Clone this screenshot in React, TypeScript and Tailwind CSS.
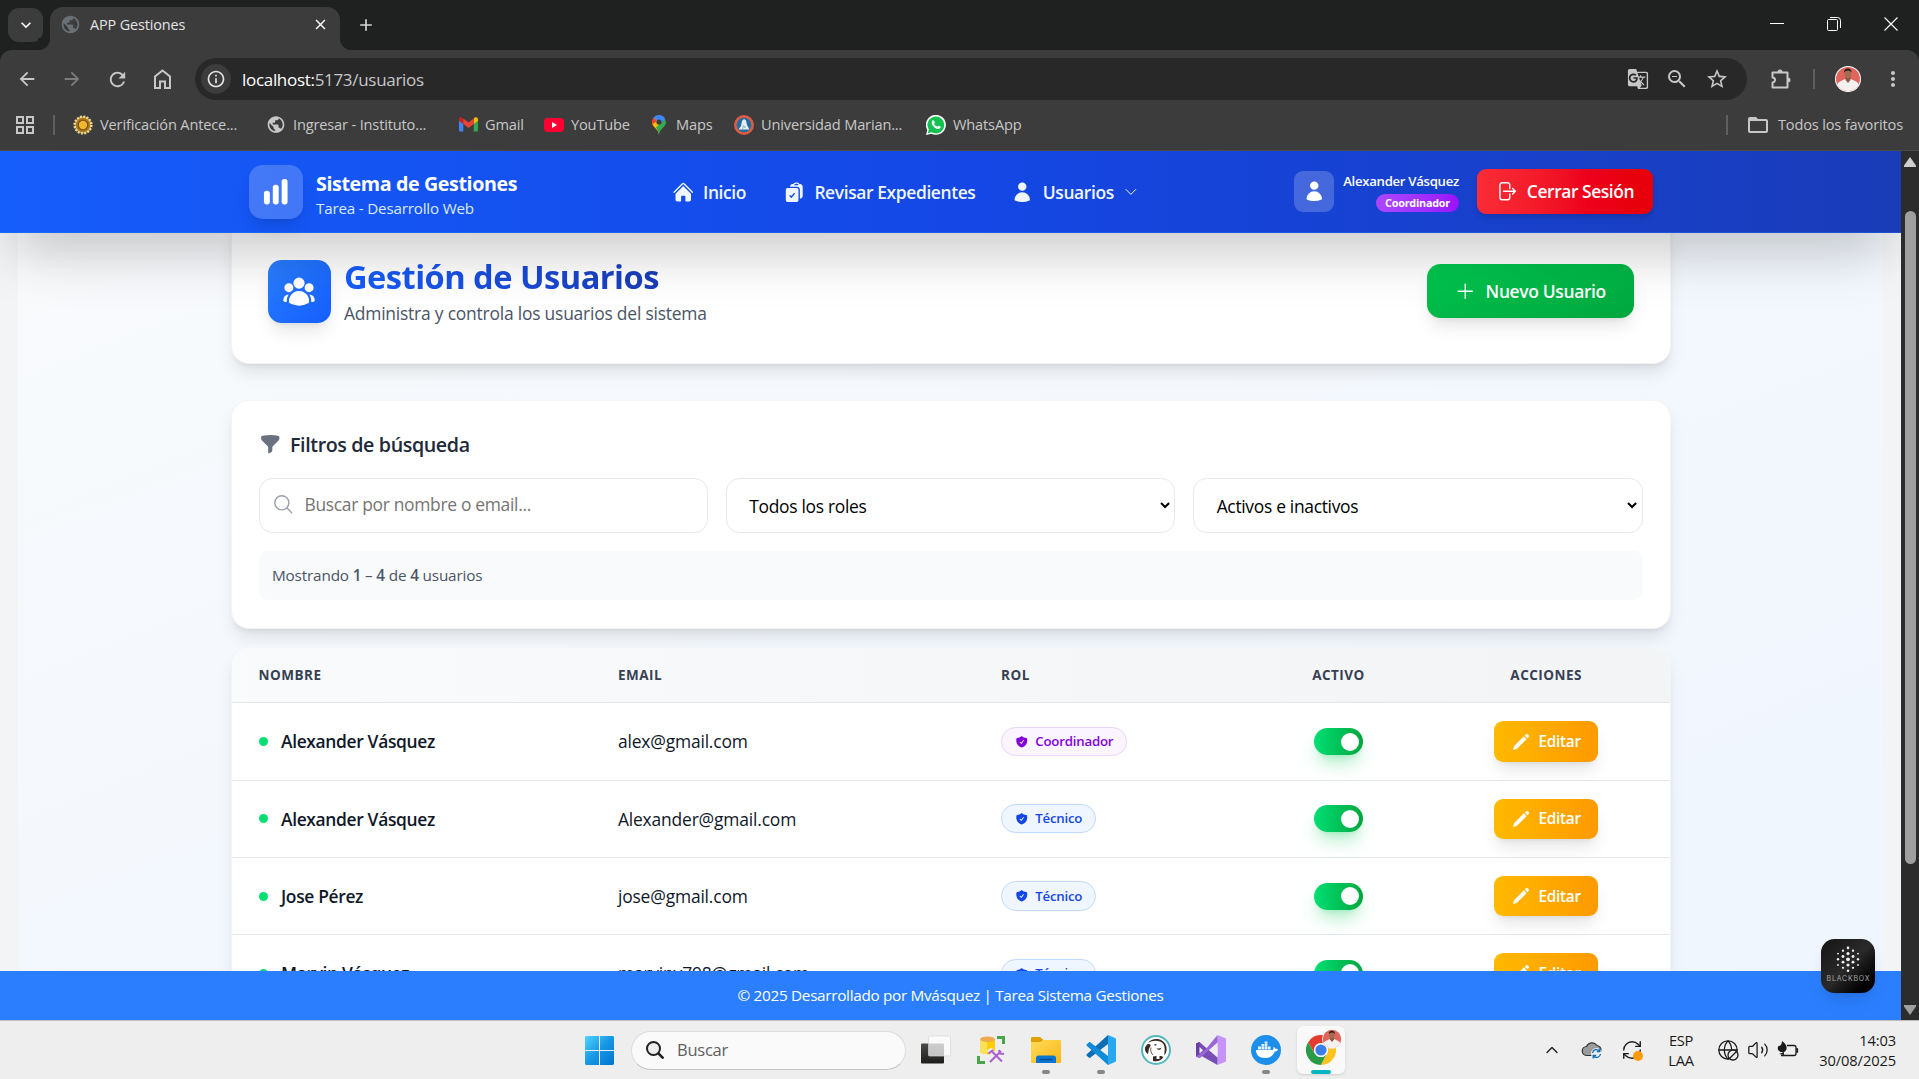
import type { ReactNode } from "react";
import {
  HiChartBar, HiHome, HiClipboardDocumentCheck, HiUser, HiUserGroup, HiFunnel, HiPencil, HiShieldCheck,
  HiOutlineChevronDown, HiOutlineArrowRightOnRectangle, HiOutlinePlus, HiOutlineMagnifyingGlass,
} from "react-icons/hi2";
import {
  MdArrowBack, MdArrowForward, MdRefresh, MdInfoOutline, MdGTranslate, MdOutlineZoomOut,
  MdStarOutline, MdMoreVert, MdFolderOpen, MdPublic, MdClose, MdAdd, MdKeyboardArrowDown,
} from "react-icons/md";
import { Globe, Volume2, RefreshCw, ChevronUp } from "lucide-react";

/* ---------- Browser chrome ---------- */

function Avatar({ className = "" }: { className?: string }) {
  return (
    <svg viewBox="0 0 26 26" className={className}>
      <defs>
        <clipPath id="av"><circle cx="13" cy="13" r="12" /></clipPath>
      </defs>
      <circle cx="13" cy="13" r="13" fill="#fff" />
      <g clipPath="url(#av)">
        <rect width="26" height="26" fill="#e0655c" />
        <path d="M1 26c0-6 1-10 6-11.500l3-1.500h6l3 1.500c5 1.500 6 5.500 6 11.500z" fill="#f5f1ef" />
        <path d="M10.500 10h5v4l-2.500 3-2.500-3z" fill="#8a5a45" />
        <ellipse cx="12.800" cy="7.500" rx="3.400" ry="4.800" fill="#a26d54" />
        <path d="M9 6.500C8.600 1 17 1 16.600 6.500 15 3.800 11 3.800 9 6.500z" fill="#241a18" />
      </g>
    </svg>
  );
}

function HomeIcon() {
  return (
    <svg viewBox="0 0 24 24" className="ml-[21px] size-6" fill="none" stroke="currentColor" strokeWidth="2">
      <path d="M5 21V9.500L12.500 3.500 20 9.500V21h-5v-6.500h-5V21z" />
    </svg>
  );
}

function PuzzleIcon() {
  return (
    <svg viewBox="0 0 24 24" className="ml-[22px] size-6" fill="none" stroke="currentColor" strokeWidth="2">
      <path d="M3.500 5.500h15v15h-15v-5a2.500 2.500 0 0 0 0-5z" strokeLinejoin="round" />
      <path d="M8.500 5a2.500 2.500 0 0 1 5 0zM19 10.500a2.500 2.500 0 0 1 0 5z" fill="currentColor" stroke="none" />
    </svg>
  );
}

function Seal() {
  return (
    <svg viewBox="0 0 20 20" className="size-5">
      <circle cx="10" cy="10" r="8.400" fill="#c99a2c" stroke="#e8d9a0" strokeWidth="2.400" strokeDasharray="2 1.300" />
      <circle cx="10" cy="10" r="7" fill="#a87420" />
      <circle cx="10" cy="10" r="5.300" fill="#7a4b13" />
      <circle cx="10" cy="10" r="4.200" fill="#edb730" />
    </svg>
  );
}

function Gmail() {
  return (
    <svg viewBox="0 0 20 16" className="w-[19px]">
      <path d="M0 3v11c0 .8.600 1.300 1.300 1.300h3.200V7z" fill="#4285f4" />
      <path d="M20 3v11c0 .8-.6 1.300-1.300 1.300h-3.200V7z" fill="#34a853" />
      <path d="M15.500 2v5.500L20 4V2.500C20 .5 17.800-.500 16.200.7z" fill="#fbbc04" />
      <path d="M0 2.500V4l4.500 3.500V2l-.7-.7C2.200-.5 0 .5 0 2.500z" fill="#c5221f" />
      <path d="M4.500 7.500V1.500L10 5.700l5.500-4.200v6L10 11.700z" fill="#ea4335" />
    </svg>
  );
}

function YouTube() {
  return (
    <svg viewBox="0 0 20 14" className="w-5">
      <rect width="20" height="14" rx="3.500" fill="#ff0033" />
      <path d="M8 4l5 3-5 3z" fill="#fff" />
    </svg>
  );
}

function Maps() {
  return (
    <svg viewBox="0 0 14 20" className="h-5">
      <path d="M7 20C7 14 0 12.500 0 7l2-4.600L7 7z" fill="#fbbc04" />
      <path d="M7 20c0-6 7-7.500 7-13l-1-3L4 12.500C5.600 15 6.500 17 7 20z" fill="#34a853" />
      <path d="M1.600 2.600A7 7 0 0 0 .4 9.200L5 6z" fill="#ea4335" />
      <path d="M1.600 2.600A7 7 0 0 1 13.300 4L8 9z" fill="#4285f4" />
      <circle cx="7" cy="7" r="2.600" fill="#3c3c3c" />
    </svg>
  );
}

function University() {
  return (
    <svg viewBox="0 0 20 20" className="size-5">
      <circle cx="10" cy="10" r="10" fill="#dd5a45" />
      <circle cx="10" cy="10" r="7.300" fill="#1f6f9e" />
      <path d="M4.500 14.500L7 11l1-5 2-2 2 1.500 1 4.500 2.500 4.500z" fill="#e8eef2" />
      <path d="M8.500 14l1-4 1 3 1-2" stroke="#9bb8c9" fill="none" />
    </svg>
  );
}

function WhatsApp() {
  return (
    <svg viewBox="0 0 20 20" className="size-5">
      <path d="M0 20l1.300-5A10 10 0 1 1 5.200 18.700z" fill="#fff" />
      <path d="M1.800 18.200l1-3.600a8.400 8.400 0 1 1 2.900 2.700z" fill="#12c151" />
      <path d="M6.500 5.500c.8-.7 1.500-.2 1.700.5l.6 1.400c0 .6-.8 1-.6 1.500.7 1.300 1.700 2.200 3 2.700.5.100 1-1.100 1.500-.9l1.800.9c.6.500 0 2.200-1.800 2.500-3.300.2-7.200-3.700-7-6.600 0-.8.300-1.500.8-2z" fill="#fff" />
    </svg>
  );
}

function Bookmark({ icon, label, className }: { icon: ReactNode; label: string; className: string }) {
  return (
    <div className={`flex h-full shrink-0 items-center whitespace-nowrap ${className}`}>
      <span className="mr-[7px] flex w-5 shrink-0 items-center justify-center">{icon}</span>
      {label}
    </div>
  );
}

function BrowserChrome() {
  return (
    <div className="flex h-[151px] shrink-0 flex-col bg-[#1f2120] text-[#c7c7c7]">
      <div className="flex h-[50px] items-end">
        <div className="mb-2 ml-2 flex h-[34px] w-[35px] items-center justify-center rounded-[11px] bg-[#3c3c3c]">
          <MdKeyboardArrowDown className="size-5 text-white" />
        </div>
        <div className="relative ml-[7px] flex h-[43px] w-[290px] items-center rounded-t-[13px] bg-[#3c3c3c] pb-2 pl-2.5">
          <span className="absolute bottom-0 -left-3 size-3 bg-[radial-gradient(circle_at_0_0,#1f2120_12px,#3c3c3c_12.5px)]" />
          <span className="absolute -right-3 bottom-0 size-3 bg-[radial-gradient(circle_at_100%_0,#1f2120_12px,#3c3c3c_12.5px)]" />
          <MdPublic className="size-[21px] text-[#6b7075]" />
          <span className="mt-px ml-[9px] text-[14.400px] tracking-[-0.008em] text-[#e3e3e3]">APP Gestiones</span>
          <MdClose className="mr-[11px] ml-auto size-[17px] text-white" />
        </div>
        <MdAdd className="mb-[15px] ml-4 size-5 text-[#d5d5d5]" />
        <div className="mb-[19px] ml-auto flex items-center gap-[43px] pr-[21px] text-white">
          <svg viewBox="0 0 14 14" className="size-3.5"><path d="M0 6.500h14" stroke="currentColor" /></svg>
          <svg viewBox="0 0 14 14" className="size-3.5" fill="none" stroke="currentColor">
            <rect x=".5" y="2.500" width="10" height="11" rx="1" />
            <path d="M3 .5h7.500a3 3 0 0 1 3 3V11" />
          </svg>
          <svg viewBox="0 0 14 14" className="size-3.5"><path d="M.5.5l13 13M13.500.5l-13 13" stroke="currentColor" strokeWidth="1.100" /></svg>
        </div>
      </div>

      <div className="flex h-[101px] flex-col rounded-t-[12px] border-b border-[#4b4b4b] bg-[#3c3c3c]">
        <div className="mt-2 flex h-[42px] items-center">
          <MdArrowBack className="ml-4 size-[22px]" />
          <MdArrowForward className="ml-[23px] size-[22px] text-[#7c7c7c]" />
          <MdRefresh className="ml-[23px] size-[23px]" />
          <HomeIcon />
          <div className="ml-[21px] flex h-full w-[1552px] items-center rounded-full bg-[#282828]">
            <span className="ml-1.5 flex size-[30px] items-center justify-center rounded-full bg-[#3c3c3c]">
              <MdInfoOutline className="size-5 text-[#e3e3e3]" />
            </span>
            <span className="mt-px ml-[11px] text-[17px] tracking-[-0.018em] text-[#c7c7c7]">
              <span className="text-white">localhost:</span>5173/usuarios
            </span>
            <MdGTranslate className="ml-auto size-[22px]" />
            <MdOutlineZoomOut className="ml-4 size-6" />
            <MdStarOutline className="mr-[18px] ml-4 size-6" />
          </div>
          <PuzzleIcon />
          <span className="ml-5 h-5 w-0.5 bg-[#5f5f5f]" />
          <Avatar className="ml-5 size-[26px]" />
          <MdMoreVert className="ml-5 size-6" />
        </div>
        <div className="flex h-[49px] items-center text-[14.600px] tracking-[-0.011em]">
          <svg viewBox="0 0 20 20" className="ml-[15px] size-5" fill="none" stroke="currentColor" strokeWidth="2">
            <path d="M2 2h6v6H2zM12 2h6v6h-6zM2 12h6v6H2zM12 12h6v6h-6z" />
          </svg>
          <span className="ml-[18px] h-5 w-0.5 bg-[#5f5f5f]" />
          <Bookmark className="ml-[18px] w-[193px]" icon={<Seal />} label="Verificación Antece..." />
          <Bookmark className="w-[192px]" icon={<MdPublic className="size-[21px]" />} label="Ingresar - Instituto..." />
          <Bookmark className="w-[86px]" icon={<Gmail />} label="Gmail" />
          <Bookmark className="w-[105px]" icon={<YouTube />} label="YouTube" />
          <Bookmark className="w-[85px]" icon={<Maps />} label="Maps" />
          <Bookmark className="w-[192px]" icon={<University />} label="Universidad Marian..." />
          <Bookmark className="w-[100px]" icon={<WhatsApp />} label="WhatsApp" />
          <span className="ml-auto h-5 w-0.5 bg-[#5f5f5f]" />
          <MdFolderOpen className="mr-2 ml-[18px] size-6" />
          <span className="mr-4">Todos los favoritos</span>
        </div>
      </div>
    </div>
  );
}

/* ---------- Application ---------- */

function Header() {
  return (
    <header className="relative z-10 h-[73px] shrink-0 border-b border-blue-500/30 bg-gradient-to-r from-blue-600 via-blue-700 to-blue-800 shadow-2xl">
      <div className="mx-auto flex h-full w-[1280px] items-center px-4">
        <div className="flex size-12 items-center justify-center rounded-xl bg-white/20 text-white shadow-lg">
          <HiChartBar className="size-7" />
        </div>
        <div className="ml-3 w-[316px] pt-[3px]">
          <div className="text-[17.500px] leading-[26px] font-bold tracking-[-0.02em] text-white">Sistema de Gestiones</div>
          <div className="text-[13.500px] leading-[18px] tracking-[-0.012em] text-blue-100">Tarea - Desarrollo Web</div>
        </div>
        <nav className="flex items-center pt-px text-[15.500px] font-semibold tracking-[-0.022em] text-blue-50">
          <a className="flex w-[99px] items-center gap-2"><HiHome className="size-5" />Inicio</a>
          <a className="flex w-[203px] items-center gap-2"><HiClipboardDocumentCheck className="size-5" />Revisar Expedientes</a>
          <a className="flex items-center gap-2"><HiUser className="size-5" />Usuarios<HiOutlineChevronDown className="size-3.5" /></a>
        </nav>
        <div className="ml-auto flex items-center">
          <div className="flex size-9 items-center justify-center rounded-lg bg-white/20 text-white">
            <HiUser className="size-5" />
          </div>
          <div className="mr-4 ml-2 flex flex-col items-end">
            <span className="text-[11.700px] leading-[18px] font-semibold tracking-[-0.022em] text-white">Alexander Vásquez</span>
            <span className="mt-0.5 flex h-4 items-center rounded-full bg-gradient-to-r from-purple-500 to-purple-600 px-2 text-[9.600px] font-bold tracking-[-0.02em] text-white">Coordinador</span>
          </div>
          <button className="flex h-10 w-[156px] items-center justify-center gap-2 rounded-lg bg-gradient-to-r from-red-500 to-red-600 to-90% text-[15.500px] font-semibold tracking-[-0.025em] text-white shadow-md">
            <HiOutlineArrowRightOnRectangle className="size-5" />Cerrar Sesión
          </button>
        </div>
      </div>
    </header>
  );
}

type User = { name: string; email: string; role: "Coordinador" | "Técnico" };

const users: User[] = [
  { name: "Alexander Vásquez", email: "alex@gmail.com", role: "Coordinador" },
  { name: "Alexander Vásquez", email: "Alexander@gmail.com", role: "Técnico" },
  { name: "Jose Pérez", email: "jose@gmail.com", role: "Técnico" },
  { name: "Marvin Vásquez", email: "marvinv798@gmail.com", role: "Técnico" },
];

function RoleBadge({ role }: { role: User["role"] }) {
  const tone = role === "Coordinador"
    ? "border-purple-200 bg-purple-50 text-purple-700"
    : "border-blue-200 bg-blue-50 text-blue-700";
  return (
    <span className={`inline-flex h-[26px] items-center gap-1.5 rounded-full border px-[11.500px] text-[11.800px] font-semibold tracking-[-0.016em] ${tone}`}>
      <HiShieldCheck className="size-3" /><span className="pt-px">{role}</span>
    </span>
  );
}

function UserRow({ user }: { user: User }) {
  return (
    <div className="grid h-[68.700px] shrink-0 grid-cols-[320px_340px_252px_144px_1fr] items-center border-b border-gray-200 text-[15.500px] tracking-[-0.010em] text-gray-900">
      <div className="flex items-center gap-3 pl-6 font-semibold tracking-[-0.02em]">
        <span className="size-2 rounded-full bg-green-400" />{user.name}
      </div>
      <div className="pl-[23.500px]">{user.email}</div>
      <div className="flex pl-6"><RoleBadge role={user.role} /></div>
      <div className="flex justify-center">
        <span className="flex h-6 w-11 items-center justify-end rounded-full bg-gradient-to-r from-green-400 to-green-600 pr-1 shadow-lg shadow-green-500/30">
          <span className="size-4 rounded-full bg-white" />
        </span>
      </div>
      <div className="flex justify-center pl-[3px]">
        <button className="flex h-9 w-[92.500px] items-center justify-center gap-2 rounded-lg bg-gradient-to-r from-amber-400 to-amber-500 text-[13.600px] font-semibold tracking-[-0.018em] text-white shadow-lg">
          <HiPencil className="size-4" />Editar
        </button>
      </div>
    </div>
  );
}

function Select({ label }: { label: string }) {
  return (
    <div className="flex h-[49.500px] items-center justify-between rounded-xl border border-gray-200 bg-white pr-1 pl-5 text-[15.500px] tracking-[-0.018em] text-black">
      {label}
      <svg viewBox="0 0 10 7" className="w-[9px]" fill="none" stroke="currentColor" strokeWidth="2"><path d="M1 1l4 4 4-4" /></svg>
    </div>
  );
}

function UsersPage() {
  return (
    <main className="min-h-0 flex-1 overflow-hidden bg-gray-100 px-4">
      <div className="flex h-full flex-col items-center bg-gradient-to-br from-slate-50 to-blue-50">
        <section className="-mt-5 flex h-[136px] w-[1280px] shrink-0 items-center rounded-2xl border border-gray-100 bg-white px-8 pt-[7px] shadow-lg">
          <div className="flex size-14 items-center justify-center rounded-xl bg-gradient-to-br from-blue-500 to-blue-600 text-white shadow-lg">
            <HiUserGroup className="size-8" />
          </div>
          <div className="ml-3">
            <h1 className="mb-px w-fit bg-gradient-to-r from-blue-600 to-blue-800 bg-clip-text text-[29px] leading-[39px] font-bold tracking-[-0.016em] text-transparent">Gestión de Usuarios</h1>
            <p className="text-[15.500px] leading-6 tracking-[-0.012em] text-gray-600">Administra y controla los usuarios del sistema</p>
          </div>
          <button className="ml-auto flex h-12 w-[184px] items-center justify-center gap-2 rounded-xl bg-gradient-to-br from-green-500 to-green-600 text-[15.500px] font-semibold tracking-[-0.02em] text-white shadow-lg">
            <HiOutlinePlus className="size-5" />Nuevo Usuario
          </button>
        </section>

        <section className="mt-[32.500px] h-[203.500px] w-[1280px] shrink-0 rounded-2xl border border-gray-100 bg-white px-6 pt-[26.500px] shadow-lg">
          <h2 className="flex h-6 items-center gap-2 text-[17.500px] font-semibold tracking-[-0.020em] text-gray-800">
            <HiFunnel className="size-5 text-gray-500" />Filtros de búsqueda
          </h2>
          <div className="mt-[17.600px] grid grid-cols-3 gap-4">
            <div className="flex h-[49.500px] items-center rounded-xl border border-gray-200 bg-white pb-0.5 pl-[11px] text-[15.500px] tracking-[-0.018em] text-[#757575]">
              <HiOutlineMagnifyingGlass className="mr-[9px] size-5 text-gray-400" />Buscar por nombre o email...
            </div>
            <Select label="Todos los roles" />
            <Select label="Activos e inactivos" />
          </div>
          <p className="mt-4 flex h-[43.500px] items-center rounded-lg bg-gray-50 px-3 text-[13.600px] tracking-[-0.011em] whitespace-pre text-gray-600">
            Mostrando <b className="font-semibold">1</b> – <b className="font-semibold">4</b> de <b className="font-semibold">4</b> usuarios
          </p>
        </section>

        <section className="mt-[17px] flex w-[1280px] shrink-0 flex-col overflow-hidden rounded-t-2xl border-x border-gray-100 bg-white shadow-lg">
          <div className="grid h-[49px] grid-cols-[320px_340px_252px_144px_1fr] items-center border-b border-gray-200 bg-gradient-to-r from-gray-50 to-gray-100 text-[12px] font-bold tracking-[0.037em] text-gray-700">
            <span className="pl-6">NOMBRE</span>
            <span className="pl-[23.500px]">EMAIL</span>
            <span className="pl-6">ROL</span>
            <span className="text-center">ACTIVO</span>
            <span className="pl-[3px] text-center">ACCIONES</span>
          </div>
          {users.map((user) => <UserRow key={user.email} user={user} />)}
        </section>
      </div>
    </main>
  );
}

function BlackboxBadge() {
  const columns = [3, 4, 5, 4, 3];
  return (
    <div className="absolute right-[23px] bottom-6 z-20 size-12 rounded-xl bg-gradient-to-br from-[#151515] via-[#2a2a2a] to-black shadow-lg">
      <svg viewBox="0 0 54 54" className="size-full">
        {columns.flatMap((n, c) =>
          Array.from({ length: n }, (_, r) => (
            <circle
              key={`${c}-${r}`}
              cx={17 + c * 5}
              cy={20.300 + (r - (n - 1) / 2) * 5.700}
              r={(c === 2 ? 1.900 : c % 2 ? 1.600 : 1.200) - Math.abs(r - (n - 1) / 2) * 0.300}
              fill="#f1f1f1"
            />
          )),
        )}
        <text x="27" y="41.500" fontSize="7" textAnchor="middle" textLength="43" fill="#a9a9a9" fontFamily="Inter, sans-serif">BLACKBOX</text>
      </svg>
    </div>
  );
}

function Scrollbar() {
  return (
    <div className="flex w-[18px] shrink-0 flex-col items-center bg-[#2c2c2c] pt-1.5 pb-[5px]">
      <svg viewBox="0 0 12 10" className="w-3" fill="#cfcfcf"><path d="M6 0l6 8.500V10H0V8.500z" /></svg>
      <div className="mt-11 h-[653px] w-[11px] rounded-full bg-[#9f9f9f]" />
      <svg viewBox="0 0 12 10" className="mt-auto w-3" fill="#9f9f9f"><path d="M6 10L0 1.500V0h12v1.500z" /></svg>
    </div>
  );
}

/* ---------- Taskbar ---------- */

function WindowsLogo() {
  return (
    <svg viewBox="0 0 29 29" className="size-[29px]">
      <defs>
        <linearGradient id="win" x1="0" y1="0" x2="1" y2="1"><stop stopColor="#4fd5ff" /><stop offset=".5" stopColor="#1796e4" /><stop offset="1" stopColor="#0073d0" /></linearGradient>
      </defs>
      <path fill="url(#win)" d="M1 0h13v14H0V1zM15 0h13l1 1v13H15zM0 15h14v14H1l-1-1zM15 15h14v13l-1 1H15z" />
    </svg>
  );
}

function TaskView() {
  return (
    <svg viewBox="0 0 30 30" className="size-[30px]">
      <defs><linearGradient id="tv" x1="0" y1="0" x2="0" y2="1"><stop stopColor="#4a4a48" /><stop offset="1" stopColor="#1d1d1c" /></linearGradient></defs>
      <rect y="8.500" width="23" height="20" rx="1" fill="url(#tv)" />
      <rect x="7.500" y="1" width="22" height="20" rx="1" fill="#fff" fillOpacity=".72" stroke="#d5d5d5" strokeWidth=".7" />
    </svg>
  );
}

function SqlTools() {
  return (
    <svg viewBox="0 0 28 28" className="size-7">
      <path d="M20 1.500h6.500V8M1.500 20v6.500H8" fill="none" stroke="#4ba34c" strokeWidth="3" />
      <path d="M3 3v13c0 3 15 3 15 0V3z" fill="#fbe05c" />
      <path d="M10 3v15.200c4.500 0 8-1.200 8-2.200V3z" fill="#ffce00" />
      <ellipse cx="10.500" cy="3.200" rx="7.500" ry="2.800" fill="#efa953" />
      <path d="M13 26l11-11M14 15l11 11M11 16l5-2.500M22 14l4.500 3.500" stroke="#eee" strokeWidth="4.500" />
      <path d="M13 26l11-11M15 15.500l10 10M11.500 17.500l4.500-3.500M22 14l1 3.500 4 .5" fill="none" stroke="#aa5fd0" strokeWidth="2" />
    </svg>
  );
}

function Explorer() {
  return (
    <svg viewBox="0 0 30 28" className="w-[30px]">
      <defs><linearGradient id="fo" x1="0" y1="0" x2="1" y2="1"><stop stopColor="#ffdb5c" /><stop offset="1" stopColor="#fdb713" /></linearGradient></defs>
      <path d="M0 2.500C0 1.500.5 1 1.500 1H9l3 2.500V8H0z" fill="#dfa000" />
      <path d="M0 6h9.500L12 4h16.500c1 0 1.500.5 1.500 1.500V26c0 .7-.5 1-1 1H1c-.7 0-1-.4-1-1z" fill="url(#fo)" />
      <path d="M5 27v-5c0-1.500 1-2.500 2.500-2.500h15c1.500 0 2.500 1 2.500 2.500v5z" fill="#0a74d1" />
      <path d="M8.500 23.500h13" stroke="#064a90" strokeWidth="1.200" />
    </svg>
  );
}

function VsCode() {
  return (
    <svg viewBox="0 0 30 30" className="size-[30px]">
      <path d="M22 0L1 19c-.7.700-.7 1.400 0 2l1.800 1.600c.6.500 1.200.4 1.700 0L22 9z" fill="#0a6fb5" />
      <path d="M22 30L1 11c-.7-.7-.7-1.400 0-2l1.800-1.600c.6-.5 1.200-.4 1.700 0L22 21z" fill="#0f8bd8" />
      <path d="M22 0l7 3c.6.300 1 .8 1 1.500v21c0 .7-.4 1.200-1 1.500l-7 3z" fill="#28a8f0" />
    </svg>
  );
}

function DBeaver() {
  return (
    <svg viewBox="0 0 30 30" className="size-[30px]">
      <circle cx="15" cy="15" r="14" fill="#fff" stroke="#55b8c0" strokeWidth="2" />
      <path d="M7 8c3-4.500 10.500-5 14.500-2 3.500 2.500 4.500 6 4 9.500-.3 2-1 3.500-2 5-.3-3 .2-4 .2-7C23.500 10 22 7.500 19 6.500 15 5 10.500 6 7 8z" fill="#382923" />
      <path d="M6 9.500c2-1 4-.2 3.500 1.500L8 13.500 7 19c-2.500-1.500-3.500-4-3-6.500z" fill="#382923" />
      <path d="M12 21.500l3-.5h5l2.500 1c-2 3.500-6 5-10.500 4z" fill="#382923" />
      <path d="M15.500 13c2 1 3.500.5 5-.5-.5 2.500-3.500 3.500-5 .5z" fill="#382923" />
      <ellipse cx="14.500" cy="9.800" rx="1.200" ry=".8" fill="#382923" />
      <path d="M10 12.500c-.8 3 0 5.500 2 7.500" fill="none" stroke="#382923" strokeWidth=".8" />
      <path d="M15.500 20.500V24h3v-3z" fill="#fff" />
    </svg>
  );
}

function VisualStudio() {
  return (
    <svg viewBox="0 0 30 30" className="size-[30px]">
      <path d="M0 8.500L3.500 7 22 23l-.500 7L2 19v2.500L0 21z" fill="#7a4fb5" />
      <path d="M0 8.500L3.500 7v16L0 21.500z" fill="#6a3fa4" />
      <path d="M21.500 0L22 7 4 23l-4-1.500L9 15z" fill="#9a67d8" />
      <path d="M21.500 0L30 3.500v23L21.500 30z" fill="#c694f8" />
      <path d="M21.500 10.500V20L15.500 15zM3.500 12v6.500l3.500-3.300z" fill="#eee" />
    </svg>
  );
}

function Docker() {
  return (
    <svg viewBox="0 0 30 30" className="size-[30px]">
      <circle cx="15" cy="15" r="15" fill="#1d8feb" />
      <path d="M5 15h16.500c1-.3 1.300-1.700.8-3 1.300.3 2 1 2.200 2 1-.3 1.800-.1 2.500.4-.6 1.400-1.700 2-3.300 2C22.500 20.500 19 23 14 23c-6 0-9-3-9-8z" fill="#fff" />
      <path d="M7 11.500h3v3H7zM10.500 11.500h2.700v3h-2.700zM13.700 11.500h2.700v3h-2.700zM16.900 11.500h2.700v3h-2.700zM10.500 9h2.700v2.200h-2.700zM13.700 9h2.700v2.200h-2.700zM13.700 6.500h2.700v2.200h-2.700z" fill="#e4f1fd" />
    </svg>
  );
}

function ChromeLogo() {
  return (
    <svg viewBox="0 0 30 30" className="size-[30px]">
      <path d="M2 7.500A15 15 0 0 1 28 7.500L15 8.200A7 7 0 0 0 9 18.500z" fill="#e33b2e" />
      <path d="M2 7.500A15 15 0 0 0 15 30l6-11.500a7 7 0 0 1-12.200 0z" fill="#2a9a47" />
      <path d="M28 7.500A15 15 0 0 1 15 30l6-11.500a7 7 0 0 0-6-10.300z" fill="#fcc31e" />
      <circle cx="15" cy="15" r="7" fill="#fff" />
      <circle cx="15" cy="15" r="5.600" fill="#3b7ded" />
    </svg>
  );
}

function TaskItem({ children, running = false }: { children: ReactNode; running?: boolean }) {
  return (
    <div className="relative flex h-12 w-[55px] items-center justify-center">
      {children}
      {running && <span className="absolute bottom-0 h-1 w-2 rounded-full bg-[#868686]" />}
    </div>
  );
}

function Taskbar() {
  return (
    <div className="flex h-[59px] shrink-0 items-center border-t border-[#bcbcbc] bg-[#eeeeee] text-[#1b1b1b]">
      <div className="ml-[585px]"><WindowsLogo /></div>
      <div className="ml-[17px] flex h-[39px] w-[275px] items-center rounded-full border border-[#dcdcdc] border-b-[#c4c4c4] bg-[#fafafa]">
        <svg viewBox="0 0 18 18" className="ml-3.5 size-[18px]" fill="#eee" stroke="#222" strokeWidth="2">
          <circle cx="7.500" cy="7.500" r="6.500" /><path d="M12 12l5.500 5.500" strokeWidth="2.500" />
        </svg>
        <span className="mt-px ml-[13px] text-[16.500px] tracking-[-0.015em] text-[#5f5f5f]">Buscar</span>
      </div>
      <div className="ml-0.5 flex items-center">
        <TaskItem><TaskView /></TaskItem>
        <TaskItem><SqlTools /></TaskItem>
        <TaskItem running><Explorer /></TaskItem>
        <TaskItem running><VsCode /></TaskItem>
        <TaskItem><DBeaver /></TaskItem>
        <TaskItem><VisualStudio /></TaskItem>
        <TaskItem running><Docker /></TaskItem>
        <div className="relative ml-1 flex size-12 items-center justify-center rounded-md bg-[#f9f9f9] shadow-sm">
          <ChromeLogo />
          <Avatar className="absolute top-[3px] right-[3px] size-5" />
          <span className="absolute bottom-0 h-1 w-5 rounded-full bg-[#00b7c3]" />
        </div>
      </div>
      <div className="mr-[23px] ml-auto flex items-center">
        <ChevronUp className="size-5" strokeWidth={1.600} />
        <svg viewBox="0 0 22 18" className="ml-[19px] w-[22px]">
          <path d="M6 14.500a4.500 4.500 0 0 1-.5-9A6 6 0 0 1 16 4.500a5 5 0 0 1 4 5l-2 5z" fill="#9b9b9b" stroke="#333" strokeWidth="1.200" />
          <circle cx="15.500" cy="12.500" r="5.500" fill="#eee" />
          <path d="M11.500 12a4 4 0 0 1 7-2M19.500 13a4 4 0 0 1-7 2M18.800 7.500v3h-3M12.200 17.500v-3h3" fill="none" stroke="#0f6cbd" strokeWidth="1.300" />
        </svg>
        <span className="relative ml-[18px]">
          <RefreshCw className="size-[22px]" strokeWidth={1.500} />
          <span className="absolute right-0 bottom-0 size-2.5 rounded-full bg-[#ff9a00]" />
        </span>
        <span className="ml-[22px] w-8 text-center text-[14.700px] leading-5 tracking-[-0.02em]">ESP<br />LAA</span>
        <span className="relative ml-5">
          <Globe className="size-[22px]" strokeWidth={1.400} />
          <svg viewBox="0 0 12 12" className="absolute right-0 bottom-0 size-3"><circle cx="6" cy="6" r="5" fill="#eee" stroke="#1b1b1b" strokeWidth="1.300" /><path d="M2.500 9.500l7-7" stroke="#1b1b1b" strokeWidth="1.300" /></svg>
        </span>
        <Volume2 className="ml-2 size-[22px]" strokeWidth={1.400} />
        <svg viewBox="0 0 22 18" className="ml-2 w-[22px]">
          <path d="M10 4.500h7a2 2 0 0 1 2 2v6a2 2 0 0 1-2 2H4M19 8h1.500v3H19" fill="none" stroke="#1b1b1b" strokeWidth="1.300" />
          <path d="M5 0c4 3 5 5 4.500 8-.5 2.500-2.500 3.500-4.500 3-3 0-5-3-4-5 .5-1.500 1.500-1.500 2-1C4 4 5 2 5 0zM2 13l5-2v3z" fill="#1b1b1b" />
        </svg>
        <span className="ml-[18px] w-[79px] text-right text-[14.700px] leading-5 tracking-[-0.008em]">14:03<br />30/08/2025</span>
      </div>
    </div>
  );
}

export default function App() {
  return (
    <div className="flex h-[1079px] w-[1919px] flex-col overflow-hidden font-['Open_Sans','Noto_Sans',sans-serif]">
      <BrowserChrome />
      <div className="flex min-h-0 flex-1">
        <div className="relative flex min-w-0 flex-1 flex-col overflow-hidden [zoom:1.125]">
          <Header />
          <UsersPage />
          <footer className="flex h-[43.500px] shrink-0 items-center justify-center bg-blue-500 text-[13.600px] tracking-[-0.020em] text-white">
            © 2025 Desarrollado por Mvásquez | Tarea Sistema Gestiones
          </footer>
          <BlackboxBadge />
        </div>
        <Scrollbar />
      </div>
      <Taskbar />
    </div>
  );
}
